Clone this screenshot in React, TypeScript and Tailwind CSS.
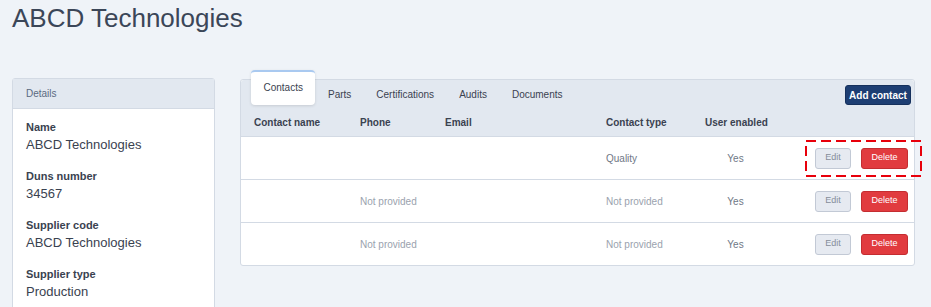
import React from "react";

const rows = [
  { phone: "", type: "Quality", enabled: "Yes" },
  { phone: "Not provided", type: "Not provided", enabled: "Yes" },
  { phone: "Not provided", type: "Not provided", enabled: "Yes" },
];

const details = [
  { label: "Name", value: "ABCD Technologies" },
  { label: "Duns number", value: "34567" },
  { label: "Supplier code", value: "ABCD Technologies" },
  { label: "Supplier type", value: "Production" },
];

const gridCols = "grid grid-cols-[106px_85px_161px_99px_61px_1fr] items-center pl-[13px] whitespace-nowrap";

export default function App() {
  return (
    <div
      className="w-[931px] h-[307px] overflow-hidden bg-[#eff3f8] pl-[12px] relative"
      style={{ fontFamily: '"Liberation Sans", Arial, sans-serif' }}
    >
      <h1 className="mt-[3px] text-[26px] leading-[30px] text-[#3b4658] font-normal">ABCD Technologies</h1>
      <div className="flex items-start gap-[25px] mt-[45px]">
        {/* Left panel */}
        <div className="w-[203px] h-[260px] shrink-0 bg-white border border-[#d3dae4] rounded-[3px]">
          <div className="h-[30px] bg-[#e2e8f0] border-b border-[#d3dae4] flex items-center pl-[13px] text-[10px] text-[#5a6a80]">
            Details
          </div>
          <div className="pl-[13px] pt-[11px] flex flex-col gap-[15px]">
            {details.map((d) => (
              <div key={d.label} className="flex flex-col gap-[2px]">
                <div className="text-[11px] leading-[14px] font-bold text-[#3a4250]">{d.label}</div>
                <div className="text-[13px] leading-[18px] text-[#3a4250]">{d.value}</div>
              </div>
            ))}
          </div>
        </div>

        {/* Right panel */}
        <div className="w-[675px] mt-[1px] bg-white border border-[#d3dae4] rounded-[3px]">
          <div className="bg-[#e2e8f0] rounded-t-[3px]">
            <div className="h-[28px] flex items-start pl-[10px] pr-[3px] whitespace-nowrap">
              <div className="mt-[-10px] h-[35px] px-[12.5px] flex items-center bg-white rounded-[4px] border-t-2 border-[#a9c9f0] shadow-[0_1px_3px_rgba(0,0,0,0.12)] text-[10px] text-[#3a4250]">
                <span className="mt-[-3px]">Contacts</span>
              </div>
              {["Parts", "Certifications", "Audits", "Documents"].map((t) => (
                <div key={t} className="h-[28px] px-[12.5px] flex items-center text-[10px] text-[#3a4250]">
                  {t}
                </div>
              ))}
              <div className="flex-1" />
              <button className="mt-[5px] h-[20px] w-[66px] rounded-[3px] bg-[#1d3e73] border border-[#15305c] text-white text-[10px] font-bold flex items-center justify-center">
                Add contact
              </button>
            </div>
            <div className={`${gridCols} h-[29px] border-b border-[#d3dae4] text-[10px] font-bold text-[#3a4250]`}>
              <div>Contact name</div>
              <div>Phone</div>
              <div>Email</div>
              <div>Contact type</div>
              <div>User enabled</div>
              <div />
            </div>
          </div>
          {rows.map((r, i) => (
            <div
              key={i}
              className={`${gridCols} text-[10px] ${i < rows.length - 1 ? "h-[43px] border-b border-[#d3dae4]" : "h-[42px]"}`}
            >
              <div />
              <div className="text-[#9aa2ae]">{r.phone}</div>
              <div />
              <div className={r.type === "Quality" ? "text-[#6f7886]" : "text-[#9aa2ae]"}>{r.type}</div>
              <div className="text-center text-[#6f7886]">{r.enabled}</div>
              <div className="flex justify-end items-center gap-[10px] pr-[6px]">
                <button className="h-[21px] w-[36px] rounded-[3px] bg-[#e6eaf1] border border-[#c2c9d5] text-[9px] text-[#858d9a] flex items-center justify-center">
                  Edit
                </button>
                <button className="h-[21px] w-[47px] rounded-[3px] bg-[#e13b3f] border border-[#c42d31] text-[9px] text-white flex items-center justify-center">
                  Delete
                </button>
              </div>
            </div>
          ))}
        </div>
      </div>

      {/* annotation overlay */}
      <svg className="absolute left-[805px] top-[140px]" width="117" height="37" viewBox="0 0 117 37">
        <rect x="1" y="1" width="115" height="35" fill="none" stroke="#e8000b" strokeWidth="2" strokeDasharray="10 5" />
      </svg>
    </div>
  );
}
